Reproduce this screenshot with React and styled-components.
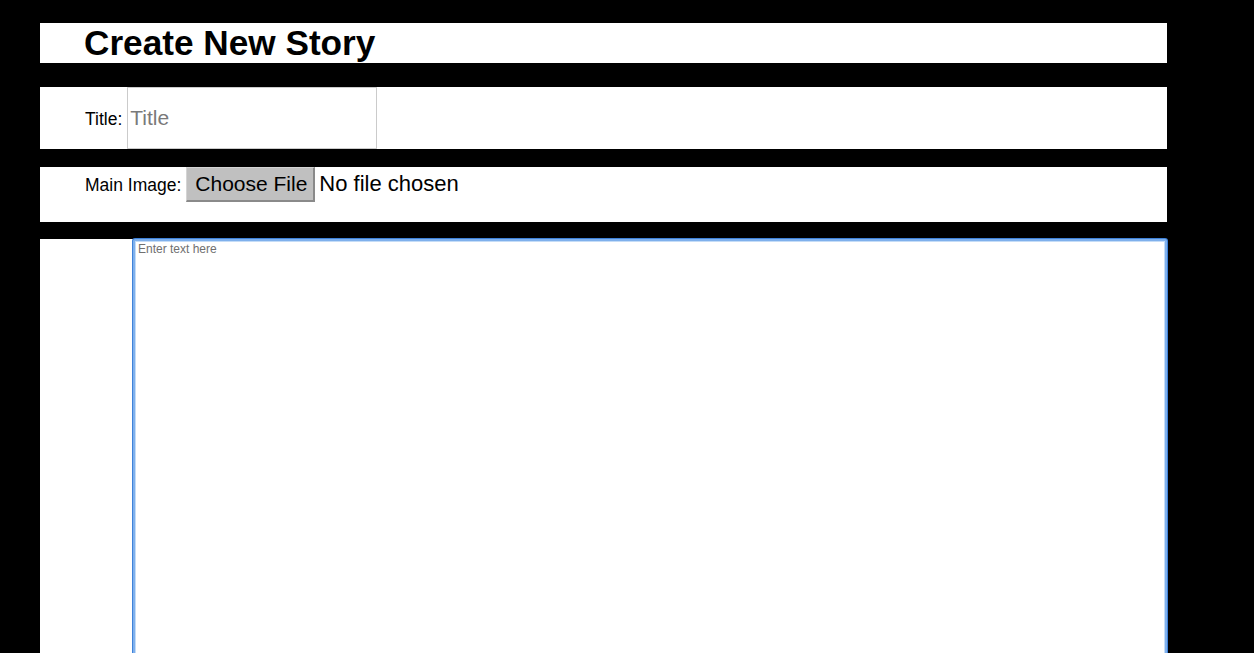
import React from "react";
import styled, { createGlobalStyle } from "styled-components";

const Global = createGlobalStyle`
  html, body {
    margin: 0;
    padding: 0;
    background: #000;
    overflow: hidden;
  }
  body {
    font-family: "Liberation Sans", Arial, Helvetica, sans-serif;
    color: #000;
  }
`;

const Page = styled.div`
  width: 1127px;
  margin: 23px 0 0 40px;
  display: flex;
  flex-direction: column;
`;

const Band = styled.div`
  background: #fff;
  margin-bottom: ${(p) => p.$gap || 0}px;
  padding-left: ${(p) => p.$indent || 45}px;
  padding-bottom: ${(p) => p.$bottom || 0}px;
  display: flex;
  align-items: baseline;
`;

const Heading = styled.h1`
  margin: 0;
  font-size: 35.2px;
  font-weight: bold;
  line-height: 40px;
  margin-left: -1px;
`;

const Label = styled.label`
  font-size: 17.5px;
  margin-right: ${(p) => p.$space || 5}px;
`;

const TitleInput = styled.input`
  box-sizing: border-box;
  width: 250px;
  height: 62px;
  border: 1px solid #cbcbcb;
  padding: 0 2px;
  margin: 0;
  font-family: inherit;
  font-size: 21px;
  outline: none;
  &::placeholder {
    color: #7a7a7a;
  }
`;

const HiddenFile = styled.input`
  display: none;
`;

const FileButton = styled.label`
  box-sizing: border-box;
  display: inline-flex;
  align-items: center;
  height: 35px;
  width: 129px;
  padding: 0 0 0 8px;
  background: #c0c0c0;
  border-right: 2px solid #8a8a8a;
  border-bottom: 2px solid #8a8a8a;
  border-top: 1px solid #d4d4d4;
  border-left: 1px solid #d4d4d4;
  font-size: 21px;
  cursor: default;
`;

const FileStatus = styled.span`
  font-size: 22px;
  margin-left: 4px;
`;

const EditorArea = styled.textarea`
  box-sizing: border-box;
  display: block;
  width: 1034px;
  height: 600px;
  margin: 0;
  padding: 1px 3px;
  border: 2px solid #7fb0ec;
  box-shadow: 0 0 0 1px #3f82d9, inset 0 0 0 1px #c4dcf7;
  border-radius: 2px;
  font-family: inherit;
  font-size: 12px;
  resize: none;
  outline: none;
  &::placeholder {
    color: #707070;
  }
`;

export default function App() {
  return (
    <>
      <Global />
      <Page>
        <Band $gap={24} $indent={45}>
          <Heading>Create New Story</Heading>
        </Band>
        <Band $gap={18}>
          <Label htmlFor="title">Title:</Label>
          <TitleInput id="title" placeholder="Title" />
        </Band>
        <Band $gap={17} $bottom={20}>
          <Label $space={5}>Main Image:</Label>
          <FileButton htmlFor="mainImage">Choose File</FileButton>
          <HiddenFile id="mainImage" type="file" />
          <FileStatus>No file chosen</FileStatus>
        </Band>
        <Band $indent={93}>
          <EditorArea placeholder="Enter text here" />
        </Band>
      </Page>
    </>
  );
}
